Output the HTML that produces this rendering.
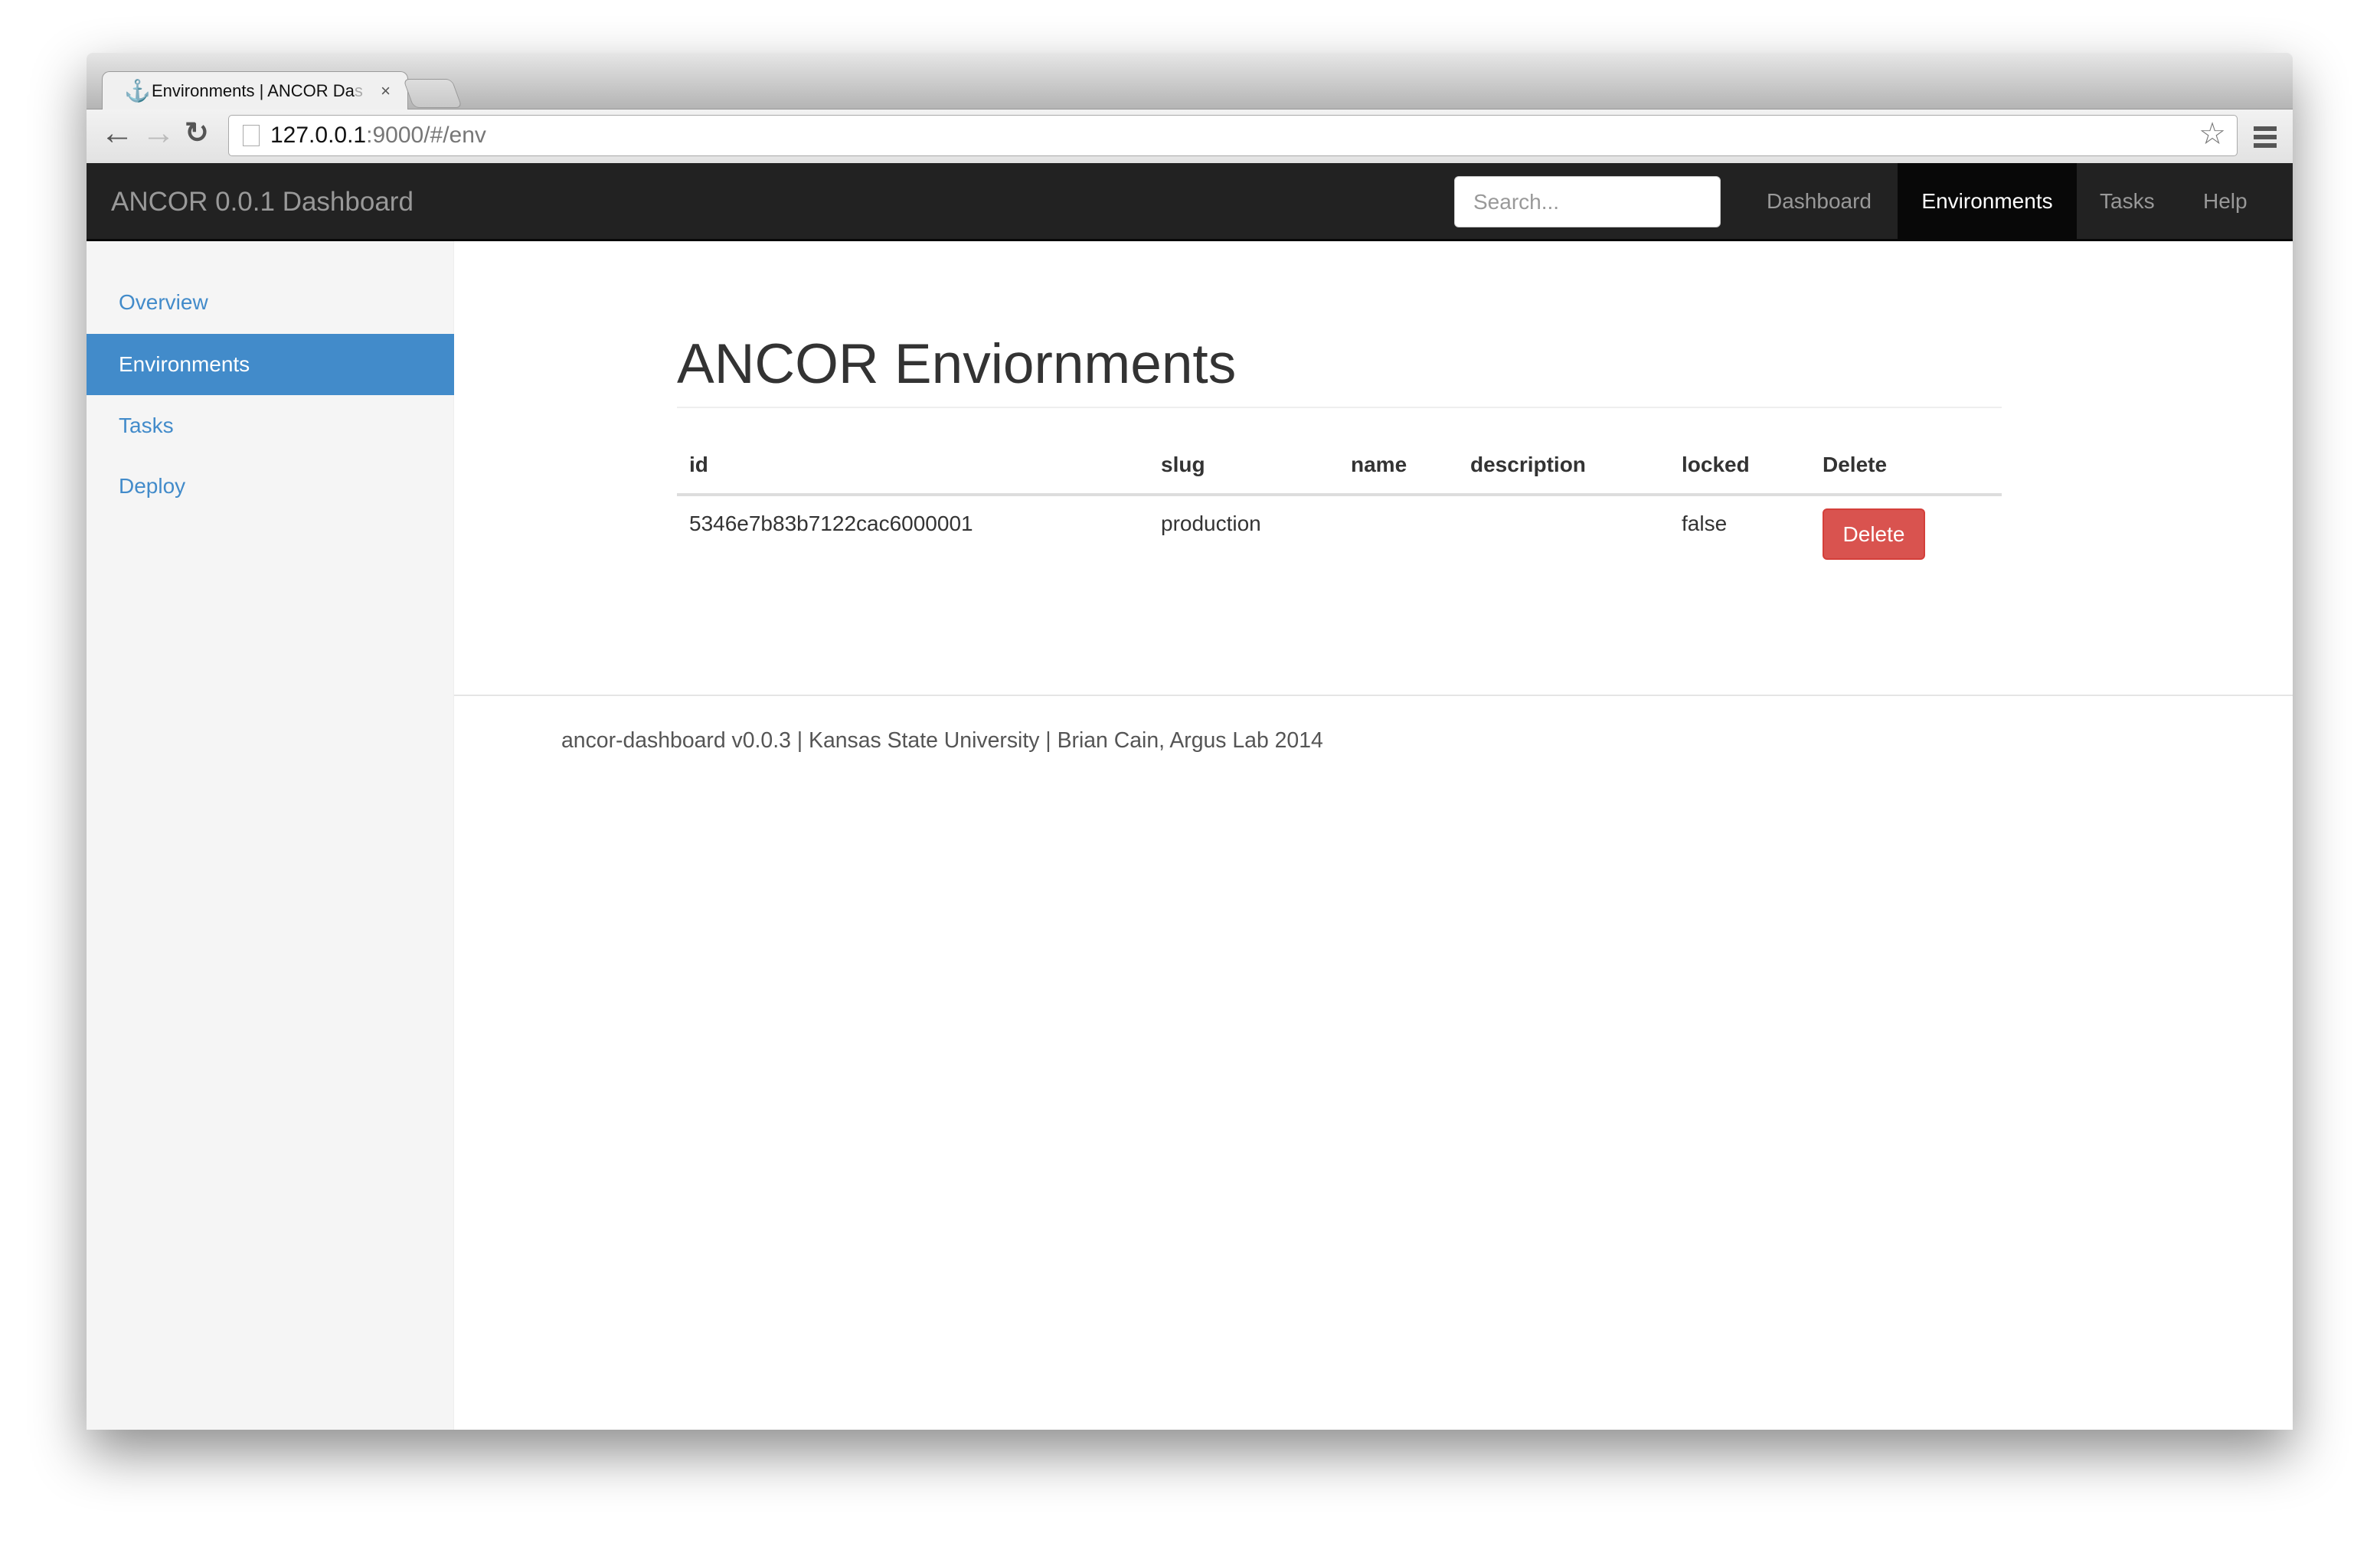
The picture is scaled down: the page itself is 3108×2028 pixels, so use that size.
<!DOCTYPE html>
<html><head><meta charset="utf-8"><style>
*{margin:0;padding:0;box-sizing:border-box}
body{width:3108px;height:2028px;background:#fff;position:relative;overflow:hidden;font-family:"Liberation Sans",Arial,sans-serif}
.win{position:absolute;left:113px;top:69px;width:2881px;height:1798px;background:#fff;box-shadow:0 30px 70px rgba(0,0,0,.45);border-radius:8px 8px 0 0;overflow:hidden}
.tabbar{position:absolute;left:0;top:0;width:100%;height:74px;background:linear-gradient(#e6e6e6,#b4b4b4);border-bottom:1px solid #999}
.tab{position:absolute;left:20px;top:24px;width:400px;height:52px;background:#f0f0f0;border:1px solid #9a9a9a;border-bottom:none;border-radius:10px 10px 0 0;font-size:22px;line-height:50px;padding-left:64px;color:#111}
.newtab{position:absolute;left:420px;top:34px;width:64px;height:38px;background:linear-gradient(#ddd,#c8c8c8);border:1px solid #999;border-radius:8px;transform:skewX(20deg)}
.toolbar{position:absolute;left:0;top:74px;width:100%;height:70px;background:linear-gradient(#f2f2f2,#e2e2e2)}
.addr{position:absolute;left:185px;top:7px;width:2624px;height:54px;background:#fff;border:1px solid #aaa;border-radius:5px;font-size:30px;line-height:52px;padding-left:54px;color:#111}
.nav{position:absolute;left:0;top:144px;width:100%;height:102px;background:#222;border-bottom:3px solid #080808}
.brand{position:absolute;left:32px;top:0;line-height:102px;font-size:35px;color:#999}
.search{position:absolute;left:1786px;top:17px;width:348px;height:67px;background:#fff;border:1px solid #ccc;border-radius:6px;font-size:28px;color:#999;line-height:65px;padding-left:24px}
.ni{position:absolute;top:0;height:99px;line-height:99px;font-size:28px;color:#999}
.side{position:absolute;left:0;top:246px;width:480px;height:1552px;background:#f5f5f5;border-right:1px solid #eee}
.si{position:absolute;left:0;width:480px;height:80px;line-height:80px;padding-left:42px;font-size:28px;color:#428bca}
h1{position:absolute;left:771px;top:362px;font-size:73px;font-weight:normal;color:#333;line-height:90px}
.hl{position:absolute;left:771px;top:462px;width:1730px;height:2px;background:#eee}
.th{position:absolute;top:522px;font-size:28px;font-weight:bold;color:#333;line-height:32px}
.td{position:absolute;top:599px;font-size:28px;color:#333;line-height:32px}
.tl{position:absolute;left:771px;top:575px;width:1730px;height:4px;background:#ddd}
.btn{position:absolute;left:2267px;top:595px;width:134px;height:67px;background:#d9534f;border:2px solid #d43f3a;border-radius:6px;color:#fff;font-size:28px;text-align:center;line-height:63px}
.fl{position:absolute;left:480px;top:838px;width:2401px;height:2px;background:#e5e5e5}
.foot{position:absolute;left:620px;top:882px;font-size:28.4px;color:#555;line-height:32px}
</style></head><body>
<div class="win">
<div class="tabbar"><div class="tab"><span style="position:absolute;left:28px;font-weight:bold;font-size:28px">⚓</span>Environments | ANCOR Da<span style="color:#aaa">s</span><span style="position:absolute;right:22px;color:#555">×</span></div><div class="newtab"></div></div>
<div class="toolbar">
<span style="position:absolute;left:18px;top:6px;font-size:44px;color:#555;font-weight:bold">←</span>
<span style="position:absolute;left:72px;top:6px;font-size:44px;color:#bbb;font-weight:bold">→</span>
<span style="position:absolute;left:128px;top:8px;font-size:38px;color:#555;font-weight:bold">↻</span>
<div class="addr"><span style="position:absolute;left:18px;top:12px;width:22px;height:28px;border:1px solid #aaa"></span>127.0.0.1<span style="color:#777">:9000/#/env</span>
<span style="position:absolute;right:14px;top:-2px;font-size:40px;color:#777">☆</span></div>
<div style="position:absolute;left:2830px;top:22px;width:30px;height:28px;border-top:6px solid #555;border-bottom:6px solid #555"><div style="margin-top:5px;height:6px;background:#555"></div></div>
</div>
<div class="nav">
<div class="brand">ANCOR 0.0.1 Dashboard</div>
<div class="search">Search...</div>
<div class="ni" style="left:2194px">Dashboard</div>
<div class="ni" style="left:2365px;width:234px;background:#080808;color:#fff;text-align:center">Environments</div>
<div class="ni" style="left:2629px">Tasks</div>
<div class="ni" style="left:2764px">Help</div>
</div>
<div class="side">
<div class="si" style="top:40px">Overview</div>
<div class="si" style="top:121px;background:#428bca;color:#fff">Environments</div>
<div class="si" style="top:201px">Tasks</div>
<div class="si" style="top:280px">Deploy</div>
</div>
<h1>ANCOR Enviornments</h1>
<div class="hl"></div>
<div class="th" style="left:787px">id</div>
<div class="th" style="left:1403px">slug</div>
<div class="th" style="left:1651px">name</div>
<div class="th" style="left:1807px">description</div>
<div class="th" style="left:2083px">locked</div>
<div class="th" style="left:2267px">Delete</div>
<div class="tl"></div>
<div class="td" style="left:787px">5346e7b83b7122cac6000001</div>
<div class="td" style="left:1403px">production</div>
<div class="td" style="left:2083px">false</div>
<div class="btn">Delete</div>
<div class="fl"></div>
<div class="foot">ancor-dashboard v0.0.3 | Kansas State University | Brian Cain, Argus Lab 2014</div>
</div>
</body></html>
